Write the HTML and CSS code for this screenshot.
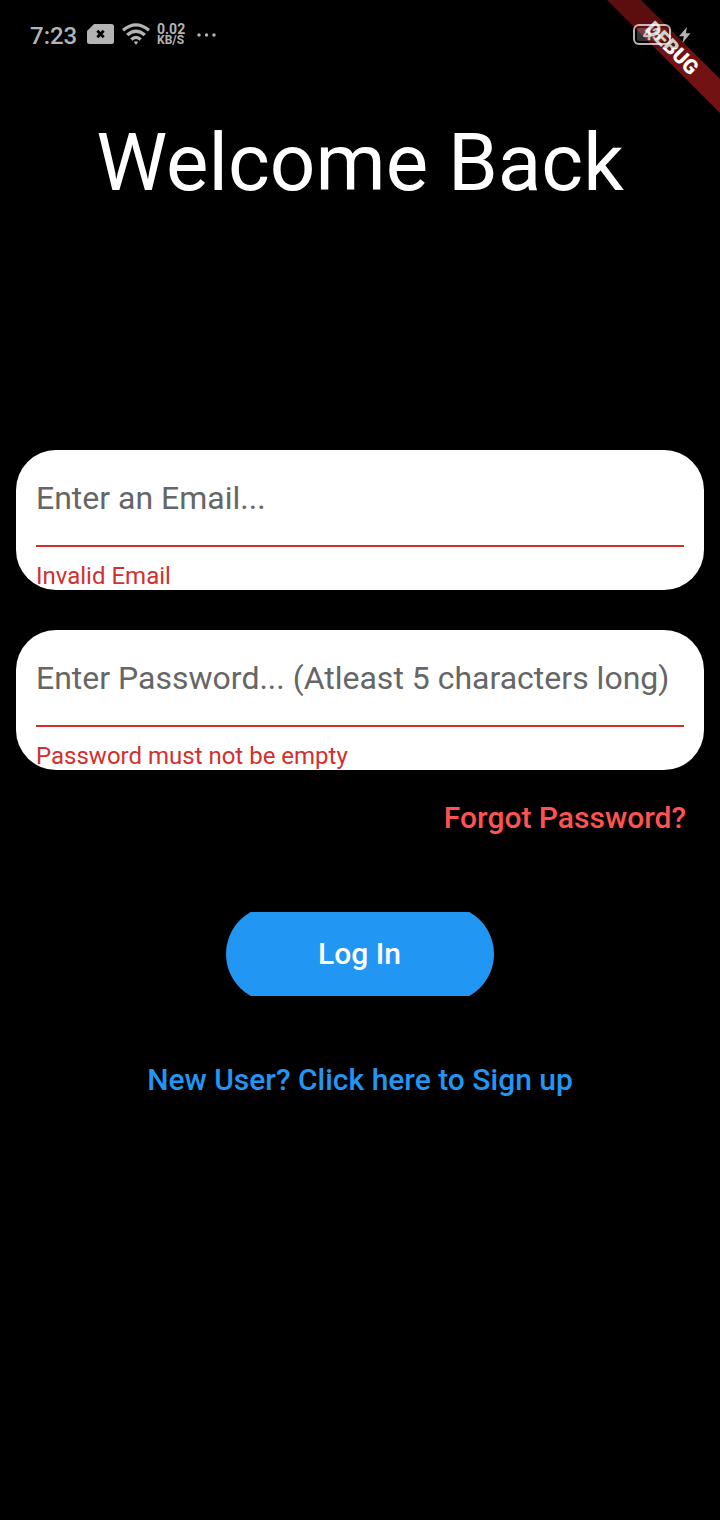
FILE: index.html
```html
<!DOCTYPE html>
<html lang="en">
<head>
<meta charset="utf-8">
<title>Log In</title>
<link rel="stylesheet" href="styles.css">
</head>
<body>
<div class="screen">
  <div class="ribbon"><span class="ribbon-text">DEBUG</span></div>
  <header class="status">
    <span class="clock">7:23</span>
    <svg class="sim" width="27" height="20" viewBox="0 0 27 20"><path fill="#b4b4b4" d="M7 0H24.500Q27 0 27 2.500V17.500Q27 20 24.500 20H2.500Q0 20 0 17.500V7Z"/><path d="M10.300 6.800l6.400 6.400M16.700 6.800l-6.400 6.400" stroke="#000" stroke-width="2.800"/></svg>
    <svg class="wifi" width="28" height="23" viewBox="0 0 28 23" fill="none" stroke="#b4b4b4" stroke-width="3.300"><path d="M1 7.300Q14-3.600 27 7.300"/><path d="M5.200 12.100Q14 4.300 22.800 12.100"/><path d="M9.300 16.500Q14 12.300 18.700 16.500"/><path d="M11.800 19Q14 17.500 16.200 19L14 21.800Z" fill="#b4b4b4" stroke="none"/></svg>
    <span class="rate"><span class="rate-num">0.02</span><span class="rate-unit">KB/S</span></span>
    <svg class="dots" width="20" height="4" viewBox="0 0 20 4" fill="#b4b4b4"><circle cx="2" cy="2" r="1.700"/><circle cx="9.500" cy="2" r="1.700"/><circle cx="17" cy="2" r="1.700"/></svg>
    <span class="battery">43</span>
    <svg class="bolt" width="12" height="16" viewBox="0 0 12 16"><path fill="#b4b4b4" d="M8 0L0 9.300H4.800L3.500 16L11.500 6.300H6.800Z"/></svg>
  </header>
  <main class="content">
    <h1 class="title">Welcome Back</h1>
    <form class="form">
      <div class="field"><div class="hint">Enter an Email...</div><div class="error">Invalid Email</div></div>
      <div class="field"><div class="hint">Enter Password... (Atleast 5 characters long)</div><div class="error">Password must not be empty</div></div>
    </form>
    <a class="forgot">Forgot Password?</a>
    <div class="login-clip"><div class="login">Log In</div></div>
    <a class="signup">New User? Click here to Sign up</a>
  </main>
</div>
</body>
</html>
```
FILE: styles.css
```css
body { margin: 0; background: #000; font-family: Roboto, sans-serif; }
.screen { position: relative; width: 720px; height: 1520px; overflow: hidden; background: #000; display: flex; flex-direction: column; }
.ribbon { position: absolute; left: 572px; top: 36px; width: 200px; height: 24px; background: #731212; transform: rotate(45deg); display: flex; align-items: center; justify-content: center; }
.ribbon-text { color: #fff; font-size: 20.4px; font-weight: 900; line-height: 24px; }
.status { position: relative; height: 48px; box-sizing: border-box; padding: 22px 29px 0 30px; display: flex; align-items: flex-start; background: rgba(0,0,0,.2); color: #b4b4b4; }
.clock { font-size: 24px; line-height: 28px; width: 57px; font-weight: 500; }
.sim { margin-top: 2px; }
.wifi { margin: 1px 0 0 8px; }
.rate { display: flex; flex-direction: column; margin-left: 7px; width: 40px; font-weight: 700; }
.rate-num { font-size: 14px; line-height: 14px; }
.rate-unit { font-size: 12px; line-height: 10px; margin-top: -1px; }
.dots { margin-top: 11px; }
.battery { margin: 2px 8px 0 auto; box-sizing: border-box; width: 38px; height: 21px; border: 2px solid rgba(255,255,255,.7); border-radius: 6px; background: linear-gradient(90deg, rgba(255,255,255,.2) 45%, rgba(255,255,255,.08) 45%) content-box; padding: 2px; font-size: 16px; line-height: 14px; font-weight: 700; text-align: center; color: rgba(255,255,255,.7); }
.bolt { margin-top: 5px; }
.content { display: flex; flex-direction: column; align-items: center; }
.title { margin: 68px 0 0; font-size: 80px; line-height: 94px; font-weight: 400; color: #fff; white-space: nowrap; }
.form { margin-top: 240px; display: flex; flex-direction: column; gap: 40px; }
.field { width: 688px; height: 140px; box-sizing: border-box; padding: 0 20px; background: #fff; border-radius: 40px; overflow: hidden; }
.hint { height: 95px; line-height: 97px; font-size: 32px; color: #666; border-bottom: 2px solid #d32f2f; white-space: nowrap; }
.error { margin-top: 15px; font-size: 24px; line-height: 28px; color: #d32f2f; }
.forgot { align-self: flex-end; margin: 30px 34px 0 0; font-size: 30px; line-height: 36px; font-weight: 500; color: #ff5252; }
.login-clip { margin-top: 76px; width: 268px; height: 84px; overflow: hidden; }
.login { margin-top: -6px; padding-right: 1px; height: 96px; line-height: 96px; border-radius: 48px; background: #2196f3; color: #fff; font-size: 30px; font-weight: 500; text-align: center; }
.signup { margin-top: 66px; font-size: 30px; line-height: 36px; font-weight: 500; color: #2196f3; }
```
